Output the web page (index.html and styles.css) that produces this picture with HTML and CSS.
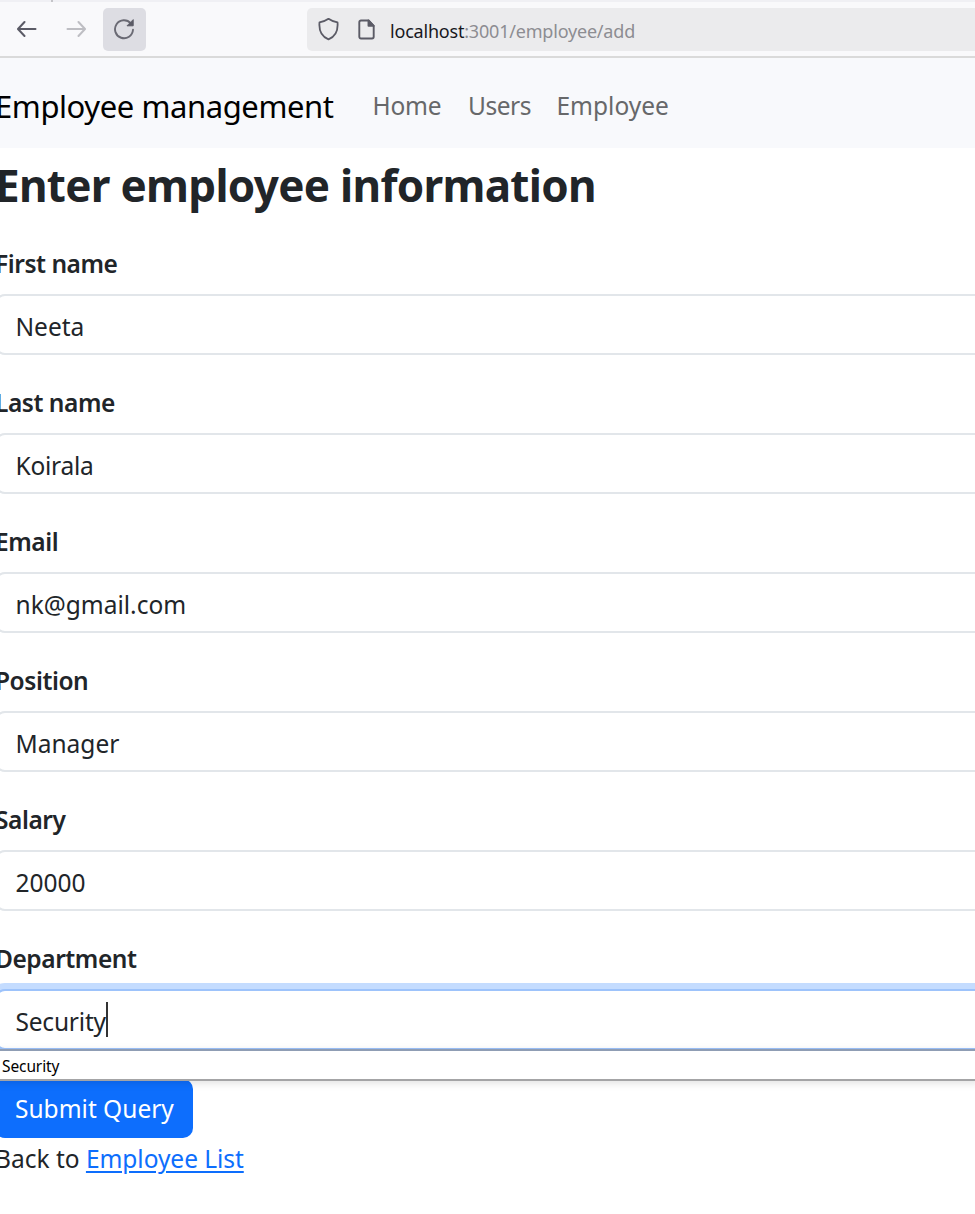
FILE: index.html
```html
<!DOCTYPE html>
<html lang="en">
<head>
<meta charset="utf-8">
<title>Employee management</title>
<link rel="stylesheet" href="styles.css">
</head>
<body>
<div class="tabstrip"><span class="tab-edge"></span></div>
<header class="toolbar">
  <div class="nav-buttons">
    <span class="tool"><svg width="20" height="18" viewBox="0 0 20 18" fill="none" stroke="#5b5b66" stroke-width="2" stroke-linecap="round" stroke-linejoin="round"><path d="M18.500 9H1.500M7.500 2L1 9L7.500 16"/></svg></span>
    <span class="tool"><svg width="20" height="18" viewBox="0 0 20 18" fill="none" stroke="#bebec3" stroke-width="2" stroke-linecap="round" stroke-linejoin="round"><path d="M1.500 9H18.500M12.500 2L19 9L12.500 16"/></svg></span>
    <span class="tool tool-active"><svg width="22" height="22" viewBox="0 0 22 22" fill="none" stroke="#6a6a74" stroke-width="1.900" stroke-linecap="round"><path d="M17.800 5.300A9 9 0 1 0 20 11.800"/><path d="M20.200 2V7.800H14.400Z" fill="#5b5b66" stroke="#5b5b66" stroke-width="1" stroke-linejoin="round"/></svg></span>
  </div>
  <div class="address">
    <svg width="21" height="24" viewBox="0 0 21 24" fill="none" stroke="#5b5b66" stroke-width="1.800" stroke-linejoin="round"><path d="M10.500 1.800C8 3.600 5 4.700 1.500 5.400C1 11 2 19 10.500 22.300C19 19 20 11 19.500 5.400C16 4.700 13 3.600 10.500 1.800Z"/></svg>
    <svg class="page-icon" width="17" height="21" viewBox="0 0 17 21" fill="none" stroke="#5b5b66" stroke-width="1.900" stroke-linejoin="round"><path d="M10.500 1.500H3A1.700 1.700 0 0 0 1.300 3.200V17.800A1.700 1.700 0 0 0 3 19.500H14A1.700 1.700 0 0 0 15.700 17.800V6.800Z"/><path d="M10.500 1.500V6.800H15.700Z" fill="#5b5b66"/></svg>
    <span class="url"><b class="host">localhost</b>:3001/employee/add</span>
  </div>
</header>
<nav class="navbar">
  <a class="brand">Employee management</a>
  <a class="link home">Home</a>
  <a class="link users">Users</a>
  <a class="link employee">Employee</a>
</nav>
<main class="content">
  <h1 class="title">Enter employee information</h1>
  <form class="form">
    <div class="field"><label class="label">First name</label><div class="input">Neeta</div></div>
    <div class="field"><label class="label">Last name</label><div class="input tight">Koirala</div></div>
    <div class="field"><label class="label">Email</label><div class="input">nk@gmail.com</div></div>
    <div class="field"><label class="label">Position</label><div class="input">Manager</div></div>
    <div class="field"><label class="label">Salary</label><div class="input">20000</div></div>
    <div class="field"><label class="label">Department</label><div class="input focused">Security<span class="caret"></span></div>
      <div class="suggestions">Security</div>
    </div>
    <button type="button" class="submit">Submit Query</button>
  </form>
  <p class="back">Back to <a class="back-link">Employee List</a></p>
</main>
</body>
</html>
```
FILE: styles.css
```css
* { box-sizing: border-box; }
body {
  margin: 0;
  height: 1214px;
  overflow: hidden;
  background: #fff;
  color: #212529;
  font-family: "Noto Sans", "Open Sans", sans-serif;
  font-size: 24.5px;
}
.tabstrip { height: 2px; background: #f0f0f4; display: flex; padding-left: 51px; }
.tab-edge { width: 2px; height: 2px; background: #c4c4c8; }
.toolbar { height: 56px; background: #f9f9fb; border-bottom: 2px solid #dadada; display: flex; align-items: center; }
.nav-buttons { display: flex; width: 307px; padding-left: 5.500px; gap: 5.500px; }
.tool { width: 43px; height: 43px; border-radius: 5px; display: flex; align-items: center; justify-content: center; }
.tool-active { background: #dddde3; }
.address { flex: 1; height: 43px; background: #ebebed; border-radius: 5px 0 0 5px; display: flex; align-items: center; padding-left: 11px; }
.page-icon { margin-left: 19px; }
.url { margin-left: 15px; font-size: 18px; letter-spacing: -0.200px; color: #8d8d92; padding-top: 3px; white-space: nowrap; }
.host { font-weight: 400; color: #18181d; }
.navbar { height: 90px; background: #f8f9fa; background: #f8f9fc; display: flex; align-items: center; color: #67686a; }
.brand { color: #000; font-size: 31px; letter-spacing: -0.420px; width: 377.500px; margin-left: -5px; white-space: nowrap; padding-top: 5px; }
.home { width: 95.500px; letter-spacing: -0.200px; }
.users { width: 88.500px; letter-spacing: -0.450px; }
.link { padding-top: 4px; }
.content { margin-left: -5px; }
.title { margin: 0; height: 97px; line-height: 74px; font-size: 44px; letter-spacing: -0.700px; font-weight: 700; white-space: nowrap; }
.form { display: flex; flex-direction: column; align-items: stretch; }
.field { height: 139px; position: relative; }
.label { display: block; height: 49px; line-height: 37px; font-weight: 600; letter-spacing: -0.450px; }
.input { height: 61px; border: 2px solid #e2e6ea; border-radius: 10px; padding-left: 18.500px; display: flex; align-items: center; margin-right: -20px; padding-top: 4px; background: #fff; }
.tight { letter-spacing: -0.250px; }
.focused { border-color: #9dc3fb; box-shadow: 0 0 0 6px #c4dcff; letter-spacing: -0.200px; }
.caret { width: 2px; height: 35px; background: #333; margin-top: -5px; }
.suggestions { position: absolute; left: 0; right: -5px; top: 109px; height: 32px; border: 2px solid #a4a4a6; border-top-color: #8f9db4; background: #fff; color: #000; font-size: 15.500px; letter-spacing: -0.100px; line-height: 30px; padding-left: 5px; box-shadow: 0 2px 8px rgba(0,0,0,.12); }
.submit { width: 198px; height: 59px; border: 0; border-radius: 10px; background: #0d6efd; color: #fff; font: inherit; padding: 0 0 0 20px; text-align: left; white-space: nowrap; }
.back { margin: 0; line-height: 42px; white-space: nowrap; }
.back-link { color: #0d6efd; text-decoration: underline; text-decoration-thickness: 2px; text-underline-offset: 3px; letter-spacing: -0.050px; }
```
